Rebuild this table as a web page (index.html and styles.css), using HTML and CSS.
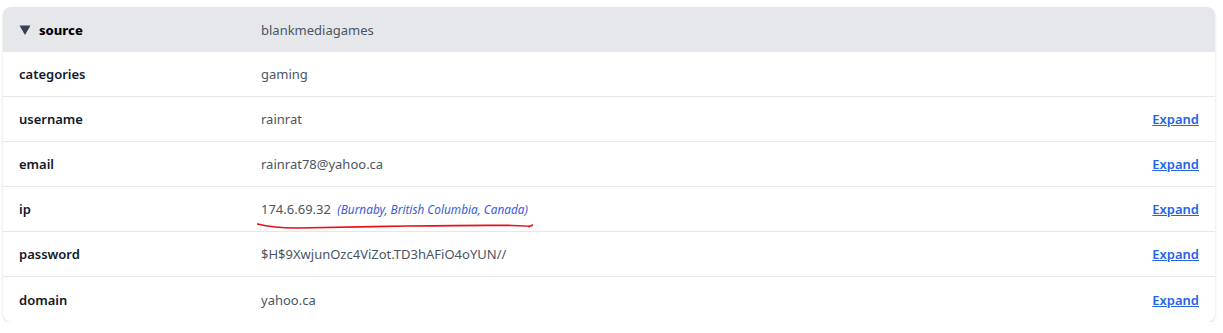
FILE: index.html
```html
<!DOCTYPE html>
<html>
<head>
<meta charset="utf-8">
<link rel="stylesheet" href="styles.css">
</head>
<body>
<div class="page">
  <div class="card">
    <div class="row head">
      <div class="key"><svg class="caret" width="12" height="10" viewBox="0 0 12 10"><path d="M0.5 0.5 H11.5 L6 10 Z" fill="#374151"/></svg><span class="src">source</span></div>
      <div class="val">blankmediagames</div>
      <div class="act"></div>
    </div>
    <div class="row">
      <div class="key">categories</div>
      <div class="val">gaming</div>
      <div class="act"></div>
    </div>
    <div class="row">
      <div class="key">username</div>
      <div class="val">rainrat</div>
      <div class="act"><a href="#">Expand</a></div>
    </div>
    <div class="row">
      <div class="key">email</div>
      <div class="val">rainrat78@yahoo.ca</div>
      <div class="act"><a href="#">Expand</a></div>
    </div>
    <div class="row">
      <div class="key">ip</div>
      <div class="val ipval">174.6.69.32 <span class="geo">(Burnaby, British Columbia, Canada)</span>
        <svg class="scribble" width="280" height="14" viewBox="0 0 280 14"><path d="M0.5 5 C 12 8, 24 9, 40 9 S 110 7.5, 150 7 S 230 6, 255 6.5 S 270 8, 272 7.5 S 276 6, 275 6" fill="none" stroke="#e8101a" stroke-width="1.7" stroke-linecap="round"/></svg>
      </div>
      <div class="act"><a href="#">Expand</a></div>
    </div>
    <div class="row">
      <div class="key">password</div>
      <div class="val">$H$9XwjunOzc4ViZot.TD3hAFiO4oYUN//</div>
      <div class="act"><a href="#">Expand</a></div>
    </div>
    <div class="row last">
      <div class="key">domain</div>
      <div class="val">yahoo.ca</div>
      <div class="act"><a href="#">Expand</a></div>
    </div>
  </div>
</div>
</body>
</html>
```

FILE: styles.css
```css
html, body { margin: 0; padding: 0; background: #ffffff; }
body { font-family: "Noto Sans", "Open Sans", sans-serif; font-size: 13px; color: #111827; }
.page { padding: 7px 8px 0 3px; }
.card {
  background: #fff;
  border-radius: 8px;
  box-shadow: 0 1px 3px rgba(0,0,0,0.12), 0 1px 2px -1px rgba(0,0,0,0.1);
  overflow: hidden;
}
.row {
  display: flex;
  align-items: center;
  height: 44px;
  padding: 0 16px;
  border-bottom: 1px solid #e5e7eb;
}
.row.last { border-bottom: none; height: 45px; }
.row.head { background: #e5e7eb; border-bottom: none; height: 45px; }
.key { width: 242px; flex: none; font-weight: 600; color: #111827; display: flex; align-items: center; }
.caret { margin-right: 8px; flex: none; }
.src { font-weight: 800; color: #000; }
.val { flex: 1; color: #4b5563; }
.ipval { position: relative; }
.geo { font-size: 11.8px; font-style: italic; color: #3b5bdb; margin-left: 3px; }
.scribble { position: absolute; left: -4px; top: 19px; }
.act { flex: none; }
.act a { color: #2563eb; font-weight: 600; text-decoration: underline; }
```
